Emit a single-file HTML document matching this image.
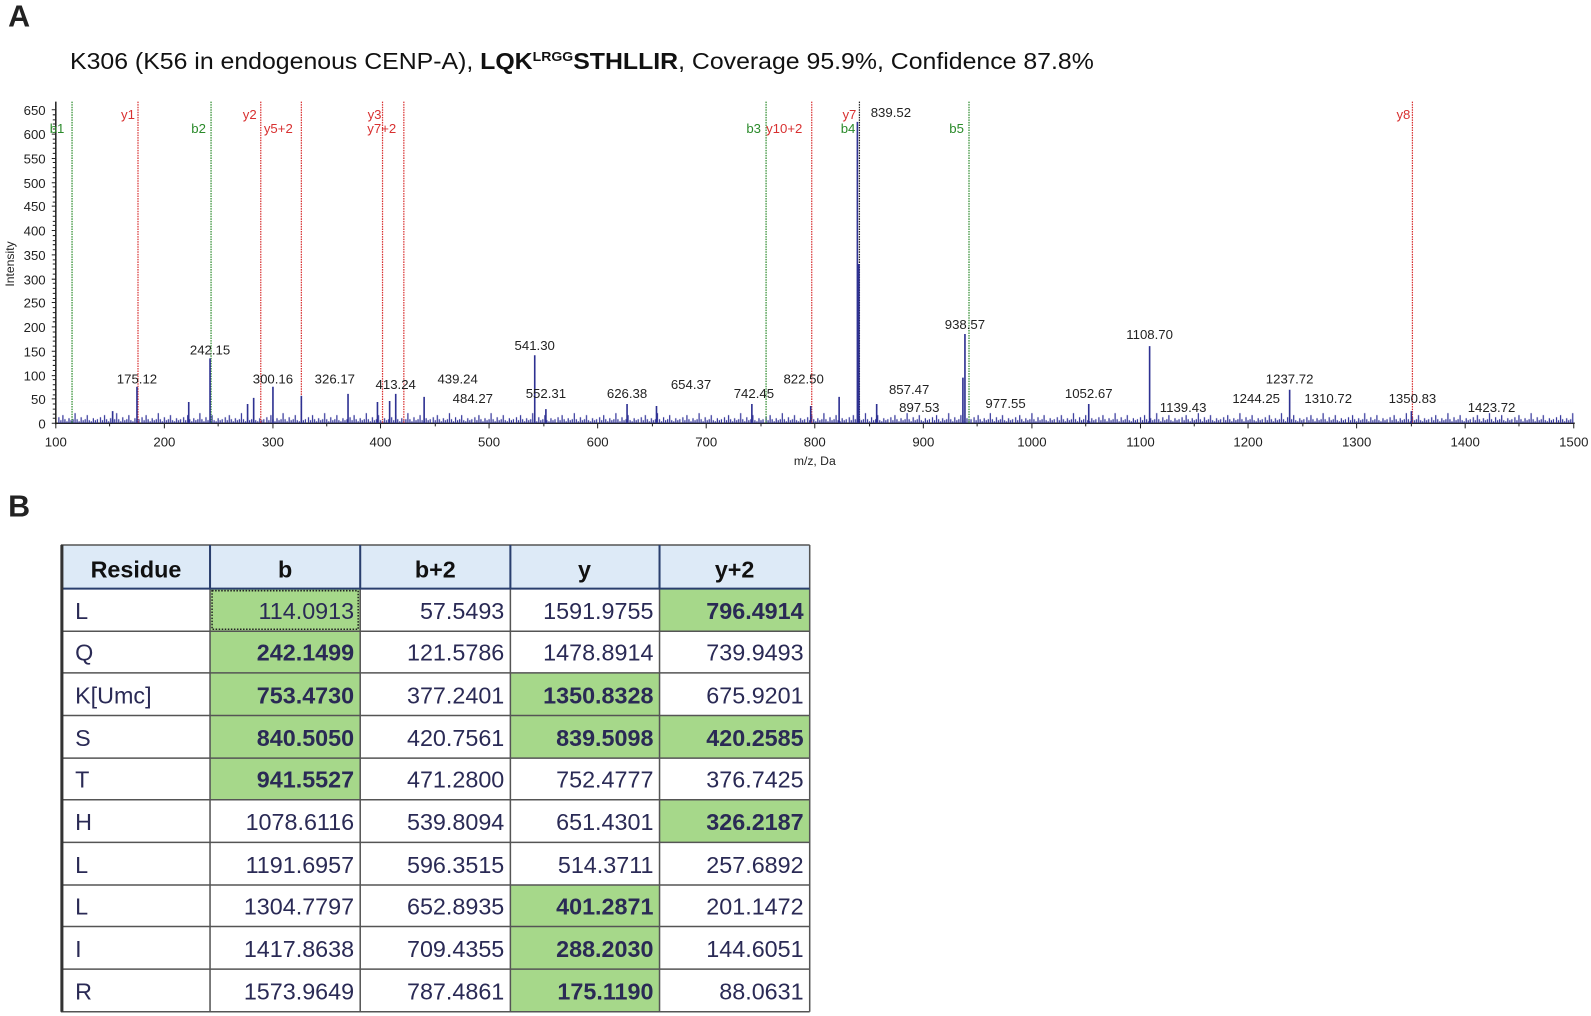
<!DOCTYPE html>
<html><head><meta charset="utf-8"><style>
html,body{margin:0;padding:0;background:#fff;}
svg{display:block;}
</style></head><body>
<svg width="1591" height="1016" viewBox="0 0 1568 1001" xmlns="http://www.w3.org/2000/svg" font-family="Liberation Sans, Arial, sans-serif">
<defs>
<pattern id="noise" x="57" y="397" width="41" height="20" patternUnits="userSpaceOnUse">
<path d="M1 20v-6M3 20v-3M5 20v-8M7 20v-4M9 20v-2M11 20v-5M13 20v-3M15 20v-4M17 20v-10M19 20v-4M21 20v-2M23 20v-6M25 20v-3M27 20v-4M29 20v-8M31 20v-3M33 20v-2M35 20v-5M37 20v-3M39 20v-4" stroke="#33359a" stroke-width="1.2"/>
</pattern>
</defs>
<text x="8" y="26" font-size="30" font-weight="bold" fill="#222">A</text>
<text x="69" y="68" font-size="23" fill="#111" textLength="1009" lengthAdjust="spacingAndGlyphs">K306 (K56 in endogenous CENP-A), <tspan font-weight="bold">LQK</tspan><tspan font-weight="bold" font-size="13" dy="-8">LRGG</tspan><tspan font-weight="bold" dy="8">STHLLIR</tspan>, Coverage 95.9%, Confidence 87.8%</text>

<g stroke="#222" stroke-width="1.5">
<line x1="55" y1="100" x2="55" y2="418"/>
<line x1="55" y1="417" x2="1552" y2="417"/>
</g>
<g stroke="#222" stroke-width="1">
<path d="M51 108h4M51 132h4M51 156h4M51 180h4M51 203h4M51 227h4M51 251h4M51 275h4M51 298h4M51 322h4M51 346h4M51 370h4M51 393h4M51 417h4"/>
<path d="M52 113h3M52 118h3M52 122h3M52 127h3M52 137h3M52 141h3M52 146h3M52 151h3M52 160h3M52 165h3M52 170h3M52 175h3M52 184h3M52 189h3M52 194h3M52 199h3M52 208h3M52 213h3M52 218h3M52 222h3M52 232h3M52 237h3M52 241h3M52 246h3M52 256h3M52 260h3M52 265h3M52 270h3M52 279h3M52 284h3M52 289h3M52 294h3M52 303h3M52 308h3M52 313h3M52 317h3M52 327h3M52 332h3M52 336h3M52 341h3M52 351h3M52 355h3M52 360h3M52 365h3M52 374h3M52 379h3M52 384h3M52 389h3M52 398h3M52 403h3M52 408h3M52 412h3"/>
<path d="M55 417v5M162 417v5M269 417v5M375 417v5M482 417v5M589 417v5M696 417v5M803 417v5M910 417v5M1017 417v5M1124 417v5M1230 417v5M1337 417v5M1444 417v5M1551 417v5"/>
<path d="M108 417v3M215 417v3M322 417v3M429 417v3M536 417v3M643 417v3M750 417v3M857 417v3M963 417v3M1070 417v3M1177 417v3M1284 417v3M1391 417v3M1497 417v3"/>
</g>
<g font-size="13" fill="#222" text-anchor="end">
<text x="45" y="113">650</text><text x="45" y="137">600</text><text x="45" y="161">550</text><text x="45" y="185">500</text><text x="45" y="208">450</text><text x="45" y="232">400</text><text x="45" y="256">350</text><text x="45" y="280">300</text><text x="45" y="303">250</text><text x="45" y="327">200</text><text x="45" y="351">150</text><text x="45" y="375">100</text><text x="45" y="398">50</text><text x="45" y="422">0</text>
</g>
<text transform="translate(14,260) rotate(-90)" font-size="12" fill="#222" text-anchor="middle">Intensity</text>
<g font-size="13" fill="#222" text-anchor="middle">
<text x="55" y="440">100</text><text x="162" y="440">200</text><text x="269" y="440">300</text><text x="375" y="440">400</text><text x="482" y="440">500</text><text x="589" y="440">600</text><text x="696" y="440">700</text><text x="803" y="440">800</text><text x="910" y="440">900</text><text x="1017" y="440">1000</text><text x="1124" y="440">1100</text><text x="1230" y="440">1200</text><text x="1337" y="440">1300</text><text x="1444" y="440">1400</text><text x="1551" y="440">1500</text>
<text x="803" y="458" font-size="12">m/z, Da</text>
</g>

<rect x="57" y="397" width="1494" height="20" fill="url(#noise)"/>

<g stroke-width="1.2" stroke-dasharray="1.5,1">
<g stroke="#2a8a2a"><line x1="71" y1="100" x2="71" y2="417"/><line x1="208" y1="100" x2="208" y2="417"/><line x1="755" y1="100" x2="755" y2="417"/><line x1="955" y1="100" x2="955" y2="417"/></g>
<g stroke="#d83030"><line x1="136" y1="100" x2="136" y2="417"/><line x1="257" y1="100" x2="257" y2="417"/><line x1="297" y1="100" x2="297" y2="417"/><line x1="377" y1="100" x2="377" y2="417"/><line x1="398" y1="100" x2="398" y2="417"/><line x1="800" y1="100" x2="800" y2="417"/><line x1="1392" y1="100" x2="1392" y2="417"/></g>
<line x1="847" y1="100" x2="847" y2="417" stroke="#222"/>
</g>

<g stroke="#2e3192" stroke-width="1.6" fill="none">
<path d="M135 417V381M207 417V353M269 417V381M297 417V390M390 417V388M418 417V391M527 417V350M538 417V403M618 417V398M647 417V400M741 417V398M827 417V391M845 417V120M846.5 417V260M864 417V398M949 417V372M951 417V329M1073 417V398M1133 417V341M1271 417V384M1391 417V405M799 417V400M186 417V396M244 417V398M250 417V392M343 417V388M372 417V396M384 417V395M111 417V405"/>
</g>

<g font-size="13">
<g fill="#2a8a2a"><text x="49" y="131">b1</text><text x="203" y="131" text-anchor="end">b2</text><text x="750" y="131" text-anchor="end">b3</text><text x="843" y="131" text-anchor="end">b4</text><text x="950" y="131" text-anchor="end">b5</text></g>
<g fill="#d83030"><text x="133" y="117" text-anchor="end">y1</text><text x="253" y="117" text-anchor="end">y2</text><text x="260" y="131">y5+2</text><text x="376" y="117" text-anchor="end">y3</text><text x="362" y="131">y7+2</text><text x="755" y="131">y10+2</text><text x="844" y="117" text-anchor="end">y7</text><text x="1390" y="117" text-anchor="end">y8</text></g>
</g>
<g font-size="13" fill="#222" text-anchor="middle">
<text x="878" y="115">839.52</text>
<text x="135" y="378">175.12</text><text x="207" y="349">242.15</text><text x="269" y="378">300.16</text><text x="330" y="378">326.17</text><text x="390" y="383">413.24</text><text x="451" y="378">439.24</text><text x="466" y="397">484.27</text><text x="527" y="345">541.30</text><text x="538" y="392">552.31</text><text x="618" y="392">626.38</text><text x="681" y="383">654.37</text><text x="743" y="392">742.45</text><text x="792" y="378">822.50</text><text x="896" y="388">857.47</text><text x="906" y="406">897.53</text><text x="951" y="324">938.57</text><text x="991" y="402">977.55</text><text x="1073" y="392">1052.67</text><text x="1133" y="334">1108.70</text><text x="1166" y="406">1139.43</text><text x="1271" y="378">1237.72</text><text x="1238" y="397">1244.25</text><text x="1309" y="397">1310.72</text><text x="1392" y="397">1350.83</text><text x="1470" y="406">1423.72</text>
</g>

<text x="8" y="509" font-size="30" font-weight="bold" fill="#222">B</text>

<rect x="60" y="537" width="738" height="43" fill="#ddeaf7"/>
<g fill="#a6d88a">
<rect x="207" y="580" width="148" height="42"/><rect x="650" y="580" width="148" height="42"/>
<rect x="207" y="622" width="148" height="41"/>
<rect x="207" y="663" width="148" height="42"/><rect x="503" y="663" width="147" height="42"/>
<rect x="207" y="705" width="148" height="42"/><rect x="503" y="705" width="147" height="42"/><rect x="650" y="705" width="148" height="42"/>
<rect x="207" y="747" width="148" height="41"/>
<rect x="650" y="788" width="148" height="42"/>
<rect x="503" y="872" width="147" height="41"/><rect x="503" y="913" width="147" height="42"/><rect x="503" y="955" width="147" height="42"/>
</g>
<g stroke="#555" stroke-width="1.5" fill="none">
<path d="M60 622H798M60 663H798M60 705H798M60 747H798M60 788H798M60 830H798M60 872H798M60 913H798M60 955H798M60 997H798"/>
<path d="M207 580V997M355 580V997M503 580V997M650 580V997M798 537V997"/>
<path d="M60 537H798"/>
</g>
<path d="M207 537V580M355 537V580M503 537V580M650 537V580M60 580H798" stroke="#2a3f6e" stroke-width="2" fill="none"/>
<path d="M61 537V997" stroke="#333" stroke-width="3"/>
<rect x="209" y="582" width="144" height="38" fill="none" stroke="#222" stroke-width="1.5" stroke-dasharray="1.5,1.5"/>
<g font-size="23" font-weight="bold" fill="#111" text-anchor="middle">
<text x="134" y="569">Residue</text><text x="281" y="569">b</text><text x="429" y="569">b+2</text><text x="576" y="569">y</text><text x="724" y="569">y+2</text>
</g>
<g font-size="23" fill="#2a2a55">
<text x="74" y="610">L</text><text x="74" y="651">Q</text><text x="74" y="693">K[Umc]</text><text x="74" y="735">S</text><text x="74" y="776">T</text><text x="74" y="818">H</text><text x="74" y="860">L</text><text x="74" y="901">L</text><text x="74" y="943">I</text><text x="74" y="985">R</text>
</g>
<g font-size="23" fill="#2a2a55" text-anchor="end">
<text x="349" y="610">114.0913</text><text x="497" y="610">57.5493</text><text x="644" y="610">1591.9755</text><text x="792" y="610" font-weight="bold">796.4914</text>
<text x="349" y="651" font-weight="bold">242.1499</text><text x="497" y="651">121.5786</text><text x="644" y="651">1478.8914</text><text x="792" y="651">739.9493</text>
<text x="349" y="693" font-weight="bold">753.4730</text><text x="497" y="693">377.2401</text><text x="644" y="693" font-weight="bold">1350.8328</text><text x="792" y="693">675.9201</text>
<text x="349" y="735" font-weight="bold">840.5050</text><text x="497" y="735">420.7561</text><text x="644" y="735" font-weight="bold">839.5098</text><text x="792" y="735" font-weight="bold">420.2585</text>
<text x="349" y="776" font-weight="bold">941.5527</text><text x="497" y="776">471.2800</text><text x="644" y="776">752.4777</text><text x="792" y="776">376.7425</text>
<text x="349" y="818">1078.6116</text><text x="497" y="818">539.8094</text><text x="644" y="818">651.4301</text><text x="792" y="818" font-weight="bold">326.2187</text>
<text x="349" y="860">1191.6957</text><text x="497" y="860">596.3515</text><text x="644" y="860">514.3711</text><text x="792" y="860">257.6892</text>
<text x="349" y="901">1304.7797</text><text x="497" y="901">652.8935</text><text x="644" y="901" font-weight="bold">401.2871</text><text x="792" y="901">201.1472</text>
<text x="349" y="943">1417.8638</text><text x="497" y="943">709.4355</text><text x="644" y="943" font-weight="bold">288.2030</text><text x="792" y="943">144.6051</text>
<text x="349" y="985">1573.9649</text><text x="497" y="985">787.4861</text><text x="644" y="985" font-weight="bold">175.1190</text><text x="792" y="985">88.0631</text>
</g>
</svg>
</body></html>
